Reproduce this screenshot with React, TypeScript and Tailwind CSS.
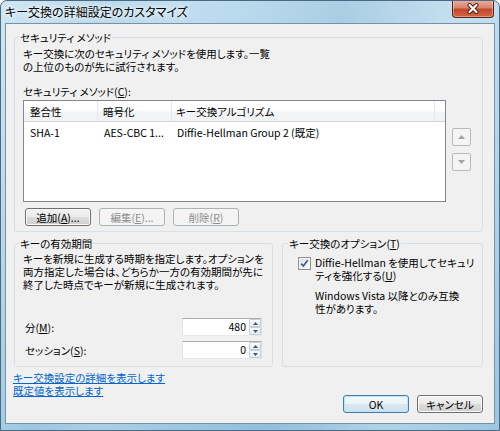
import React from "react";

const Acc = ({ c }: { c: string }) => <span className="underline underline-offset-[1px]">{c}</span>;

function Btn({
  children,
  disabled,
  def,
}: {
  children: React.ReactNode;
  disabled?: boolean;
  def?: boolean;
}) {
  let cls =
    "h-[18px] w-[66px] rounded-[3px] border flex items-center justify-center leading-[13px] shrink-0 ";
  if (disabled) {
    cls += "border-[#adb2b5] bg-[#f4f4f4] text-[#8d8d8d]";
  } else if (def) {
    cls +=
      "border-[#3c7fb1] bg-[linear-gradient(180deg,#f4f9fc_0%,#eaf3f8_50%,#dbe8f0_50%,#cfe0eb_100%)] shadow-[inset_0_0_0_1px_#bfe3f7]";
  } else {
    cls +=
      "border-[#707070] bg-[linear-gradient(180deg,#f2f2f2_0%,#ebebeb_50%,#dddddd_50%,#cfcfcf_100%)] shadow-[inset_0_0_0_1px_#fafafa]";
  }
  return <div className={cls}>{children}</div>;
}

function SmallArrowBtn({ up }: { up?: boolean }) {
  return (
    <div className="w-[19px] h-[18px] rounded-[2px] border border-[#b5babd] bg-[#f4f4f4] flex items-center justify-center">
      <svg width="7" height="4" viewBox="0 0 7 4">
        {up ? <path d="M0 4 L3.5 0 L7 4 Z" fill="#a3a3a3" /> : <path d="M0 0 L3.5 4 L7 0 Z" fill="#a3a3a3" />}
      </svg>
    </div>
  );
}

function Spin({ value }: { value: string }) {
  return (
    <div className="w-[80px] h-[18px] flex border border-[#abadb3] border-l-[#e2e3ea] border-r-[#dbdfe6] border-b-[#e3e9ef] bg-white">
      <div className="flex-1 text-right pr-[3px] leading-[16px]">{value}</div>
      <div className="w-[12px] flex flex-col">
        <div className="h-[8px] flex items-center justify-center border border-[#c9cdd2] rounded-[1px] bg-[linear-gradient(180deg,#fbfbfb,#e8eaec)]">
          <svg width="5" height="3" viewBox="0 0 5 3">
            <path d="M0 3 L2.5 0 L5 3 Z" fill="#3d5577" />
          </svg>
        </div>
        <div className="h-[8px] flex items-center justify-center border border-[#c9cdd2] rounded-[1px] bg-[linear-gradient(180deg,#fbfbfb,#e8eaec)]">
          <svg width="5" height="3" viewBox="0 0 5 3">
            <path d="M0 0 L2.5 3 L5 0 Z" fill="#3d5577" />
          </svg>
        </div>
      </div>
    </div>
  );
}

function Checkbox() {
  return (
    <div className="w-[13px] h-[13px] shrink-0 border border-[#8e8f8f] bg-[linear-gradient(135deg,#d8d9db_0%,#f4f4f4_60%,#ffffff_100%)] shadow-[inset_0_0_0_1px_#f5f5f5] flex items-center justify-center">
      <svg width="11" height="11" viewBox="0 0 11 11">
        <path d="M2.2 5.6 L4.3 8 L8.8 2.2" stroke="#3e5d9d" strokeWidth="1.8" fill="none" strokeLinejoin="round" />
      </svg>
    </div>
  );
}

function ListView() {
  return (
    <div className="w-[423px] h-[102px] border border-[#828790] bg-white flex flex-col shrink-0">
      <div className="h-[21px] flex border-b border-[#d5d5d5] bg-[linear-gradient(180deg,#ffffff_0%,#ffffff_45%,#f3f4f6_55%,#f1f2f4_100%)]">
        <div className="w-[74px] pl-[6px] pt-[2px] leading-[18px] border-r border-[#e3e8ee]">整合性</div>
        <div className="w-[74px] pl-[5px] pt-[2px] leading-[18px] border-r border-[#e3e8ee]">暗号化</div>
        <div className="w-[263px] pl-[4px] pt-[2px] leading-[18px] border-r border-[#e3e8ee]">キー交換アルゴリズム</div>
        <div className="flex-1" />
      </div>
      <div className="h-[19px] flex pt-[1px] leading-[19px]">
        <div className="w-[74px] pl-[6px]">SHA-1</div>
        <div className="w-[74px] pl-[6px] whitespace-nowrap">AES-CBC 1...</div>
        <div className="w-[263px] pl-[5px] whitespace-nowrap">Diffie-Hellman Group 2 (既定)</div>
      </div>
    </div>
  );
}

export default function App() {
  return (
    <div className="w-[500px] h-[431px] flex flex-col overflow-hidden rounded-t-[7px] border border-[#4b6983] bg-[linear-gradient(100deg,rgba(255,255,255,0.35)_0%,rgba(255,255,255,0)_18%,rgba(255,255,255,0.15)_30%,rgba(255,255,255,0)_45%,rgba(70,130,170,0.12)_60%,rgba(255,255,255,0.2)_80%,rgba(255,255,255,0)_100%),linear-gradient(180deg,#b8d9ec_0%,#a8cfe6_50%,#9cc7e1_100%)] font-['Noto_Sans_CJK_JP','Noto_Sans',sans-serif] [font-feature-settings:'palt'] text-[10.5px] leading-[13px] text-black">
      {/* title bar */}
      <div className="h-[22px] shrink-0 flex items-center pl-[4px]">
        <span className="text-[12px] leading-[14px] whitespace-nowrap [text-shadow:0_0_4px_#ffffff,0_0_8px_#ffffff]">
          キー交換の詳細設定のカスタマイズ
        </span>
        <div className="ml-auto mr-[5px] self-start -mt-[1px] w-[42px] h-[18px] rounded-b-[4px] border border-t-0 border-[#5a2217] bg-[linear-gradient(180deg,#eab0a2_0%,#d88470_45%,#c4472b_55%,#d5653f_100%)] shadow-[inset_0_0_0_1px_rgba(255,255,255,0.35)] flex items-center justify-center">
          <svg width="14" height="11" viewBox="0 0 14 11">
            <path d="M3.5 2 L10.5 9 M10.5 2 L3.5 9" stroke="#4a1a10" strokeWidth="4" strokeLinecap="round" />
            <path d="M3.5 2 L10.5 9 M10.5 2 L3.5 9" stroke="#ffffff" strokeWidth="2.2" strokeLinecap="round" />
          </svg>
        </div>
      </div>

      {/* client area */}
      <div className="mx-[4px] h-[401px] shrink-0 border border-[#7492ab] bg-[#f0f0f0] flex flex-col pl-[8px] pr-[11px] pt-[7px]">
        {/* Security methods */}
        <fieldset className="border border-[#d5dfe5] rounded-[3px] min-w-0">
          <legend className="ml-[4px] px-[1px] leading-[13px]">セキュリティ メソッド</legend>
          <div className="pl-[8px] pt-[3px] pb-[5px]">
            <div className="whitespace-nowrap">
              キー交換に次のセキュリティ メソッドを使用します。一覧
              <br />
              の上位のものが先に試行されます。
            </div>
            <div className="mt-[12px]">
              セキュリティ メソッド(<Acc c="C" />):
            </div>
            <div className="mt-[2px] flex">
              <ListView />
              <div className="ml-[6px] mt-[28px] flex flex-col gap-[7px]">
                <SmallArrowBtn up />
                <SmallArrowBtn />
              </div>
            </div>
            <div className="mt-[6px] ml-[2px] flex gap-[8px]">
              <Btn>
                追加(<Acc c="A" />)...
              </Btn>
              <Btn disabled>
                編集(<Acc c="E" />)...
              </Btn>
              <Btn disabled>
                削除(<Acc c="R" />)
              </Btn>
            </div>
          </div>
        </fieldset>

        <div className="mt-[5px] flex">
          {/* Key lifetime */}
          <fieldset className="w-[259px] h-[130px] border border-[#d5dfe5] rounded-[3px] min-w-0">
            <legend className="ml-[4px] px-[1px] leading-[13px]">キーの有効期間</legend>
            <div className="pl-[8px] pt-[2px]">
              <div className="whitespace-nowrap">
                キーを新規に生成する時期を指定します。オプションを
                <br />
                両方指定した場合は、どちらか一方の有効期間が先に
                <br />
                終了した時点でキーが新規に生成されます。
              </div>
              <div className="mt-[27px] flex items-center">
                <span className="ml-[2px] w-[157px]">
                  分(<Acc c="M" />):
                </span>
                <Spin value="480" />
              </div>
              <div className="mt-[5px] flex items-center">
                <span className="ml-[2px] w-[157px]">
                  セッション(<Acc c="S" />):
                </span>
                <Spin value="0" />
              </div>
            </div>
          </fieldset>

          {/* Key exchange options */}
          <fieldset className="ml-[9px] w-[201px] h-[130px] border border-[#d5dfe5] rounded-[3px] min-w-0">
            <legend className="ml-[5px] px-[1px] leading-[13px]">
              キー交換のオプション(<Acc c="T" />)
            </legend>
            <div className="pl-[15px] pt-[6px]">
              <div className="flex items-start">
                <div className="mt-[1px]">
                  <Checkbox />
                </div>
                <div className="ml-[4px] whitespace-nowrap">
                  Diffie-Hellman を使用してセキュリ
                  <br />
                  ティを強化する(<Acc c="U" />)
                </div>
              </div>
              <div className="ml-[17px] mt-[7px] whitespace-nowrap">
                Windows Vista 以降とのみ互換
                <br />
                性があります。
              </div>
            </div>
          </fieldset>
        </div>

        {/* bottom */}
        <div className="mt-[4px] flex">
          <div className="-ml-[1px] flex flex-col text-[#0066cc]">
            <span className="underline underline-offset-[1px]">キー交換設定の詳細を表示します</span>
            <span className="underline underline-offset-[1px] self-start">既定値を表示します</span>
          </div>
          <div className="ml-auto mt-[24px] flex gap-[8px]">
            <Btn def>OK</Btn>
            <Btn>キャンセル</Btn>
          </div>
        </div>
      </div>
    </div>
  );
}
